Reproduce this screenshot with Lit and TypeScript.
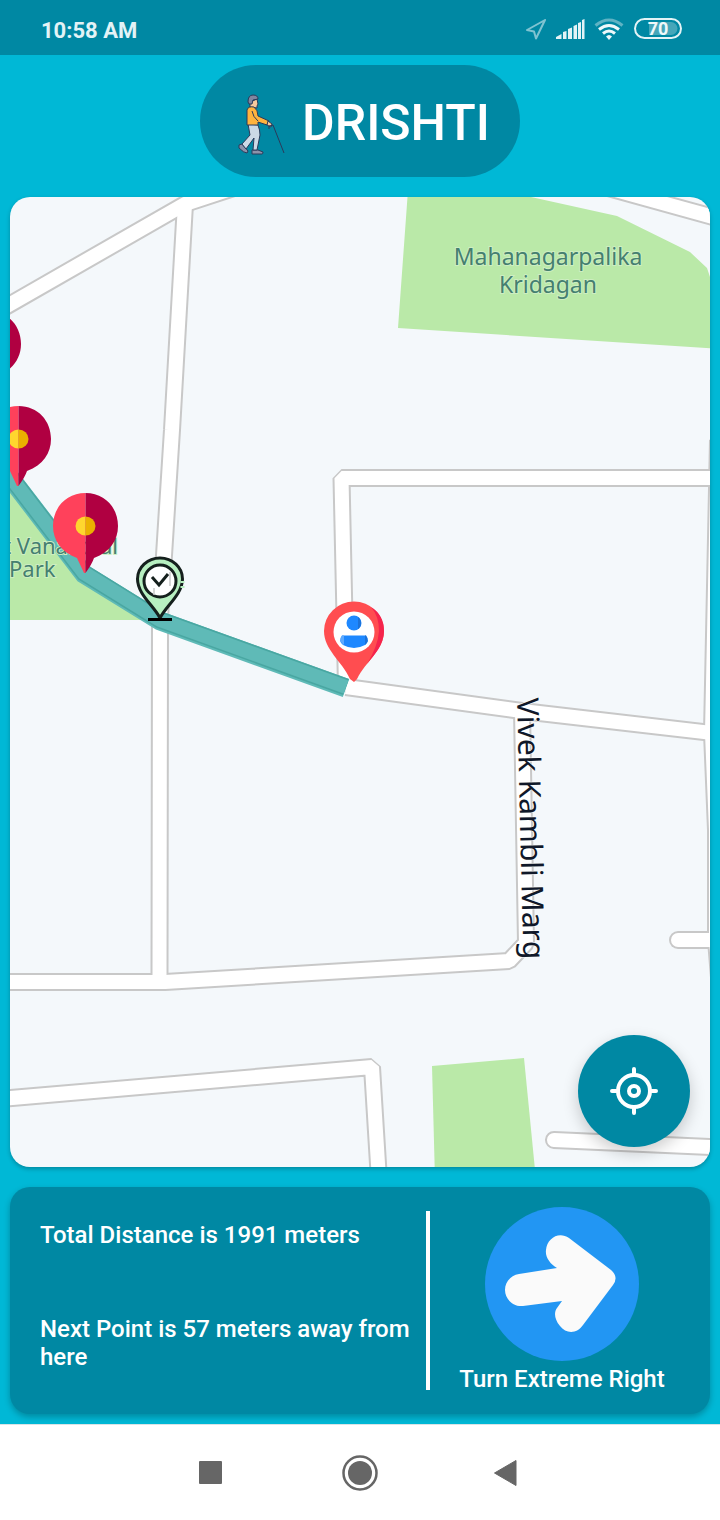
import { LitElement, html, css, svg } from "lit";
import { customElement, property } from "lit/decorators.js";

const ROADS = [
  "M0 310 L185 204 L240 186",
  "M185 204 L172 430 L160 618 L159.500 982",
  "M0 982 H165 L509 961 L526 943 L522 710",
  "M346 687 L522 711 L712 733",
  "M718 440 L712 733 L716 830 V940 L720 990",
  "M720 478 H341.500 L346 687",
  "M0 1099 L372 1067 L379 1180",
  "M590 183 L724 220",
];
const LANES = ["M730 940 H678", "M554 1140 L730 1148"];
const PARKS = [
  "M408 190 L500 190 L531 197 L617 216 L690 252 L707 268 L710 277 L720 349 L398 328 Z",
  "M0 478 L80 570 L152 620 H0 Z",
  "M432 1066 L524 1058 L536 1180 H435 Z",
];
const ROUTE = "M-4 459 L84 574 L160 621 L346 688";
const STOPS = [
  { x: -12, y: 344 },
  { x: 18, y: 439 },
  { x: 85, y: 526 },
];

@customElement("route-map")
class RouteMap extends LitElement {
  static styles = css`
    :host { display: flex; min-height: 0; position: relative; background: #f4f8fb; border-radius: 20px; overflow: hidden; }
    .map { display: block; width: 100%; flex: 1; }
    .casing { fill: none; stroke: #c8c8c8; stroke-width: 18; stroke-linejoin: bevel; }
    .road { fill: none; stroke: #fff; stroke-width: 14; stroke-linejoin: bevel; }
    .lane { stroke-linecap: round; }
    .park { fill: #bae9a8; }
    .route { fill: none; stroke: #5fbab7; stroke-width: 19; }
    .route-edge { fill: none; stroke: #49a7a2; stroke-width: 17; }
    .route-core { fill: none; stroke: #5fbab7; stroke-width: 14; }
    .place { font: 400 23px "Noto Sans", sans-serif; fill: #457f70; stroke: #cdeec2; stroke-width: 2px; paint-order: stroke; }
    .small { font-size: 22px; }
    .street { font: 400 30px "Noto Sans", sans-serif; fill: #101829; stroke: #fff; stroke-width: 1px; paint-order: stroke; }
    .locate {
      position: absolute; right: 20px; bottom: 20px; width: 112px; height: 112px; padding: 0; border: 0;
      border-radius: 50%; background: #0088a3; display: grid; place-items: center;
      box-shadow: 0 6px 16px rgba(0, 0, 0, 0.2);
    }
  `;

  private stop(x: number, y: number) {
    return svg`<g transform="translate(${x} ${y})">
      <path fill="#ff415b" d="M0.500 -33 C-19 -33 -32 -18 -32 0 C-32 14 -24 26 -8 32 L-1 47 H0.500 Z"/>
      <path fill="#b00041" d="M0.500 -33 C20 -33 33 -18 33 0 C33 14 25 26 9 32 Q7 38 0.500 47 Z"/>
      <path fill="#ffd62e" d="M0.500 -9.500 A10 9.500 0 0 0 0.500 9.500 Z"/>
      <path fill="#ebb000" d="M0.500 -9.500 A10 9.500 0 0 1 0.500 9.500 Z"/>
    </g>`;
  }

  render() {
    return html`
      <svg class="map" viewBox="10 197 700 970" preserveAspectRatio="xMidYMid slice" role="img" aria-label="Route map">
        ${PARKS.map((d) => svg`<path class="park" d=${d} />`)}
        ${ROADS.map((d) => svg`<path class="casing" d=${d} />`)}
        ${LANES.map((d) => svg`<path class="casing lane" d=${d} />`)}
        ${ROADS.map((d) => svg`<path class="road" d=${d} />`)}
        ${LANES.map((d) => svg`<path class="road lane" d=${d} />`)}
        <path class="route" d=${ROUTE} />
        <g transform="translate(0 -1)">
          <path class="route-edge" d=${ROUTE} />
          <path class="route-core" d=${ROUTE} />
        </g>
        <text class="place" x="548" y="265" text-anchor="middle">Mahanagarpalika</text>
        <text class="place" x="548" y="293" text-anchor="middle">Kridagan</text>
        <text class="place small" x="118" y="554" text-anchor="end">t Vanasthal</text>
        <text class="place small" x="9" y="577">Park</text>
        <text class="street" transform="translate(517 698) rotate(88.600)">Vivek Kambli Marg</text>
        ${STOPS.map((s) => this.stop(s.x, s.y))}
        <g fill="none" stroke="#15201d">
          <path fill="#b7efc0" stroke-width="3" d="M160 618 C154 606 137.500 594 137.500 579 A22.500 21 0 0 1 182.500 579 C182.500 594 166 606 160 618 Z" />
          <path stroke="#b7efc0" stroke-width="4" d="M182.500 581 v8" stroke-dasharray="2 3" />
          <circle cx="160" cy="581" r="16" fill="#fff" stroke-width="3" />
          <path stroke="#c8c8c8" stroke-width="1.500" d="M154 588 v7 M170 572 v14" />
          <path stroke-width="3" d="M152 577 L159 585 L168 574" />
          <path stroke="#000" stroke-width="3" d="M148 619.500 H172" />
        </g>
        <g>
          <path fill="#ff4d50" d="M354 682 L350 679 C342 661 324 650 324 631 A30 29.500 0 0 1 384 631 C384 650 366 661 357 679 Z" />
          <path fill="#f5244c" d="M371 607 Q384 615 384 631 C384 645 374 655 367 664 Q378 646 379 631 Q379 616 371 607 Z" />
          <circle cx="354" cy="632" r="20.500" fill="#fff" />
          <circle cx="354" cy="623" r="7.500" fill="#1e88ff" />
          <path fill="#1e88ff" d="M342 635.500 H366 Q370 641 365 645 Q354 651 343 645 Q338 641 342 635.500 Z" />
          <path fill="#1c72d8" d="M358 617 A7.500 7.500 0 0 1 358 629 Z M365 635.500 H366 Q370 641 365 645 Z" />
          <path fill="#5eaaff" d="M342 635.500 H344 V645 Q338 641 342 635.500 Z" />
        </g>
      </svg>
      <button class="locate" aria-label="Centre on my location">
        <svg width="48" height="48" viewBox="0 0 48 48" fill="none" stroke="#fff" stroke-width="4" stroke-linecap="round" aria-hidden="true">
          <circle cx="24" cy="24" r="16" />
          <circle cx="24" cy="24" r="5" />
          <path d="M24 2 V8 M24 40 V46 M2 24 H8 M40 24 H46" />
        </svg>
      </button>
    `;
  }
}

@customElement("app-root")
class AppRoot extends LitElement {
  @property({ type: Number }) total = 1991;
  @property({ type: Number }) next = 57;
  @property() turn = "Turn Extreme Right";

  static styles = css`
    :host { display: flex; flex-direction: column; min-height: 100vh; background: #00b8d6; color: #fff; font-family: Roboto, sans-serif; }
    .status { height: 55px; padding: 0 38px 0 41px; display: flex; align-items: center; justify-content: space-between; background: #0088a3; box-sizing: border-box; }
    .time { font-size: 22px; font-weight: 700; line-height: 28px; padding-top: 6px; color: #e3f3f6; }
    .signals { display: flex; align-items: center; gap: 8px; padding-top: 3px; }
    .signals svg { display: block; }
    .battery { font: 700 18px Roboto, sans-serif; fill: #eef8fa; }
    .brand {
      align-self: center; display: flex; align-items: center; gap: 8px; height: 112px; box-sizing: border-box;
      margin: 10px 0 20px; padding: 4px 30px 0; border-radius: 56px; background: #0088a3;
    }
    .name { margin: 0; font-size: 50px; font-weight: 500; line-height: 60px; }
    .map-card { flex: 1; margin: 0 10px 20px; box-shadow: 0 2px 4px rgba(0, 0, 0, 0.25); }
    .panel {
      display: grid; grid-template-columns: minmax(0, 1fr) 4px 264px; margin: 0 10px 10px; padding: 20px 16px 21px 30px;
      border-radius: 20px; background: #0088a3; box-shadow: 0 3px 6px rgba(0, 0, 0, 0.25);
      font-size: 24px; font-weight: 500; line-height: 28px;
    }
    .facts { display: flex; flex-direction: column; justify-content: space-between; gap: 20px; padding: 14px 0 22px; }
    .facts p, .turn p { margin: 0; }
    .rule { background: #fff; margin: 4px 0 3px; }
    .turn { display: flex; flex-direction: column; align-items: center; gap: 4px; }
    .nav { display: flex; justify-content: center; gap: 76px; height: 96px; background: #fff; border-top: 1px solid #d9e3e6; box-sizing: border-box; }
    .key { width: 72px; padding: 0; border: 0; background: none; display: grid; place-items: center; }
  `;

  render() {
    return html`
      <header class="status">
        <span class="time">10:58 AM</span>
        <div class="signals">
          <svg width="22" height="22" viewBox="0 0 22 22" fill="none" stroke="#7fc3d1" stroke-width="2" stroke-linejoin="round" aria-label="Location"><path d="M19 2 L1 12 L8 13.500 L10 20.500 Z" /></svg>
          <svg width="30" height="22" viewBox="0 0 30 22" fill="#e3f3f6" aria-label="Signal">
            <path d="M0 21 V19 L5.500 16 V21 Z M7 21 V14 L10.500 13 V21 Z M12 21 V11 L16 9.500 V21 Z M17.500 21 V8 L21 6.500 V21 Z M22 21 V5 L25 4 V21 Z M26 21 V2 L28.500 1 V21 Z" />
          </svg>
          <svg width="30" height="22" viewBox="0 0 30 22" fill="none" stroke="#eef8fa" stroke-width="3" aria-label="Wi-Fi">
            <path stroke="#5fb3c4" d="M1.500 7.500 Q15 -3.500 28.500 7.500" />
            <path d="M5 11.500 Q15 3.500 25 11.500 M9 15.500 Q15 10.500 21 15.500" />
            <path fill="#eef8fa" stroke="none" d="M12 18.500 Q15 15.500 18 18.500 L15 22 Z" />
          </svg>
          <svg width="50" height="22" viewBox="0 0 50 22" aria-label="Battery">
            <rect x="3" y="1" width="46" height="19" rx="9.500" fill="none" stroke="#e3f3f6" stroke-width="2" />
            <path fill="#45a6b9" d="M17 4 H39 A6.500 6.500 0 0 1 39 17 H17 Z" />
            <text class="battery" x="26" y="17" text-anchor="middle">70</text>
          </svg>
        </div>
      </header>

      <div class="brand">
        <svg width="64" height="64" viewBox="-2 -4 64 64" stroke="#2b3a5a" stroke-width="1" stroke-linejoin="round" aria-hidden="true">
          <path fill="#8d93aa" d="M7 50 L10 49 L16 56 L15 58 Q12 58 7 53 Z M20 55 H26 L31 57 Q31 59 30 59 H20 Z" />
          <path fill="#ccd9e6" d="M16 29 L26 30 Q28 35 28 40 L25 55 H21 L22 43 L14 54 L10 49 L18 40 Z" />
          <path fill="#f5c99d" d="M18 7 L25 4 L26 9 L25 11 V13 L18 12 Z" />
          <path fill="#8086a0" d="M16 7 Q16 0 21 0 Q26 0 26 4 L21 5 L20 9 L17 9 Z" />
          <path fill="#ffb33e" d="M15 15 Q16 11 22 12 Q26 15 26 21 L37 26 L35 30 L26 27 V30 H15 Z" />
          <path fill="none" d="M20 16 Q21 22 26 26" />
          <path fill="#f5c99d" d="M36 26 L40 29 L39 32 L35 30 Z" />
          <path fill="none" d="M37 34 V31 L41 30 L52 58" />
        </svg>
        <h1 class="name">DRISHTI</h1>
      </div>

      <route-map class="map-card"></route-map>

      <section class="panel">
        <div class="facts">
          <p>Total Distance is ${this.total} meters</p>
          <p>Next Point is ${this.next} meters away from here</p>
        </div>
        <div class="rule"></div>
        <div class="turn">
          <svg width="154" height="154" viewBox="0 0 154 154" aria-hidden="true">
            <circle cx="77" cy="77" r="77" fill="#2296f3" />
            <path fill="#fafafa" d="M84 31 L126 63 Q134 70 128 78 L98 118 C92 127 81 127 75 119 C69 112 69 105 72 101 L77 94 L38 99 C28 100 20 92 20 83 C20 75 26 68 34 67 L72 61 C65 57 60 50 61 43 C62 31 74 24 84 31 Z" />
          </svg>
          <p>${this.turn}</p>
        </div>
      </section>

      <nav class="nav">
        <button class="key" aria-label="Recent apps"><svg width="36" height="36" viewBox="0 0 36 36"><rect x="5" y="6" width="23" height="23" rx="1" fill="#666" /></svg></button>
        <button class="key" aria-label="Home"><svg width="36" height="36" viewBox="0 0 36 36"><circle cx="18" cy="18" r="16.500" fill="none" stroke="#666" stroke-width="2.500" /><circle cx="18" cy="18" r="12" fill="#666" /></svg></button>
        <button class="key" aria-label="Back"><svg width="36" height="36" viewBox="0 0 36 36"><path fill="#666" stroke="#666" stroke-width="1" stroke-linejoin="round" d="M4.500 18 L26 5.500 V30.500 Z" /></svg></button>
      </nav>
    `;
  }
}
